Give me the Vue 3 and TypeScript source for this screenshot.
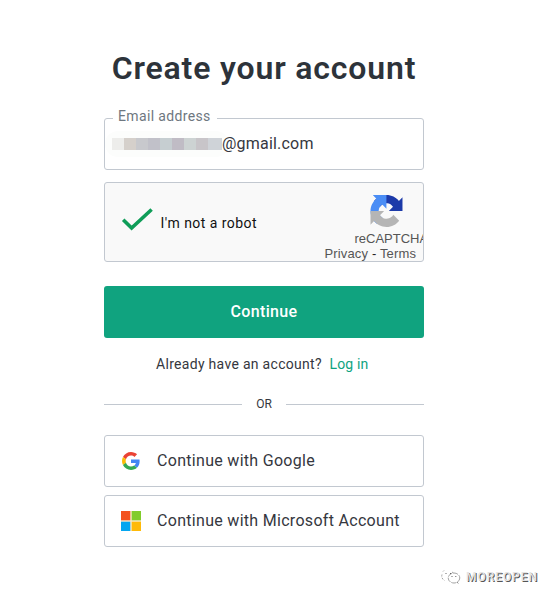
<script setup lang="ts">
const mosaic: string[] = ['#ededeb', '#d5d0cb', '#c8c9cd', '#c1c1c9', '#c6ced1', '#c0bcc5', '#cdd3d3', '#c8c5c9', '#cfd3d8']
</script>

<template>
  <div class="page">
    <main class="card">
      <h1 class="title"><span>Create your account</span></h1>

      <div class="field">
        <span class="label"><span class="label-text">Email address</span></span>
        <span class="mosaic"><i v-for="(c, i) in mosaic" :key="i" :style="{ background: c }"></i></span>
        <span class="email">@gmail.com</span>
      </div>

      <div class="captcha">
        <svg class="check" width="32" height="24" viewBox="0 0 32 24">
          <path d="M2.2 11.7 L10.6 20 L30.6 1.5" fill="none" stroke="#0f9d58" stroke-width="3.6" />
        </svg>
        <span class="robot">I'm not a robot</span>
        <div class="brand">
          <svg class="logo" width="33" height="33" viewBox="0 0 64 64">
            <path fill="#1c3aa9" d="M64 31.955l-.033-1.37V4.687l-7.16 7.16C50.948 4.674 42.033.093 32.05.093c-10.4 0-19.622 4.96-25.458 12.64l11.736 11.86a15.55 15.55 0 0 1 4.754-5.334c2.05-1.6 4.952-2.906 8.968-2.906.485 0 .86.057 1.135.163 4.976.393 9.288 3.14 11.828 7.124l-8.307 8.307L64 31.953" />
            <path fill="#4a8df5" d="M31.862.094l-1.37.033H4.594l7.16 7.16C4.58 13.147 0 22.06 0 32.046c0 10.4 4.96 19.622 12.64 25.458L24.5 45.768a15.55 15.55 0 0 1-5.334-4.754c-1.6-2.05-2.906-4.952-2.906-8.968 0-.485.057-.86.163-1.135.393-4.976 3.14-9.288 7.124-11.828l8.307 8.307L31.86.095" />
            <path fill="#b5b5b5" d="M.001 32.045l.033 1.37v25.898l7.16-7.16c5.86 7.173 14.774 11.754 24.76 11.754 10.4 0 19.622-4.96 25.458-12.64l-11.736-11.86a15.55 15.55 0 0 1-4.754 5.334c-2.05 1.6-4.952 2.906-8.968 2.906-.485 0-.86-.057-1.135-.163-4.976-.393-9.288-3.14-11.828-7.124l8.307-8.307c-10.522.04-22.4.066-27.295-.005" />
          </svg>
          <span class="name">reCAPTCHA</span>
          <span class="terms">Privacy <b>-</b> Terms</span>
        </div>
      </div>

      <button class="primary" type="button"><span>Continue</span></button>

      <p class="login"><span class="ask">Already have an account?</span><a class="link">Log in</a></p>

      <div class="divider"><span class="or">OR</span></div>

      <div class="social">
        <svg class="icon google" width="20" height="20" viewBox="0 0 48 48">
          <path fill="#ea4335" d="M24 9.5c3.54 0 6.71 1.22 9.21 3.6l6.85-6.85C35.9 2.38 30.47 0 24 0 14.62 0 6.51 5.38 2.56 13.22l7.98 6.19C12.43 13.72 17.74 9.5 24 9.5z" />
          <path fill="#4285f4" d="M46.98 24.55c0-1.57-.15-3.09-.38-4.55H24v9.02h12.94c-.58 2.96-2.26 5.48-4.78 7.18l7.73 6c4.51-4.18 7.09-10.36 7.09-17.65z" />
          <path fill="#fbbc05" d="M10.53 28.59A14.5 14.5 0 0 1 9.77 24c0-1.6.27-3.14.76-4.59l-7.98-6.19A23.9 23.9 0 0 0 0 24c0 3.88.92 7.54 2.56 10.78z" />
          <path fill="#34a853" d="M24 48c6.48 0 11.93-2.13 15.89-5.81l-7.73-6c-2.15 1.45-4.92 2.3-8.16 2.3-6.26 0-11.57-4.22-13.47-9.91l-7.98 6.19C6.51 42.62 14.62 48 24 48z" />
        </svg>
        <span class="social-text">Continue with Google</span>
      </div>
      <div class="social">
        <svg class="icon" width="20" height="20" viewBox="0 0 20 20">
          <path fill="#f9e9c8" d="M0 0h20v20H0z" />
          <path fill="#f3531f" d="M0 0h9.3v9.3H0z" />
          <path fill="#81cc2b" d="M10.7 0H20v9.3h-9.3z" />
          <path fill="#05a6f0" d="M0 10.7h9.3V20H0z" />
          <path fill="#ffba08" d="M10.7 10.7H20V20h-9.3z" />
        </svg>
        <span class="social-text">Continue with Microsoft Account</span>
      </div>
    </main>

    <footer class="watermark">
      <svg width="22" height="16" viewBox="0 0 22 16" fill="none" stroke="#999" stroke-width="0.9">
        <path d="M2 5.5C1 9 3 10.5 4.5 11.5M3 2.5l1-1M12 3l1.5 1" stroke-dasharray="2 1.3" />
        <ellipse cx="14" cy="9" rx="5.8" ry="5" stroke-dasharray="5 1" />
        <path d="M11.5 7.5h1M15.3 7.5h1M17 13.2l1.2 1.2M5.5 4.5h1M10 4.5h1" stroke="#555" />
      </svg>
      <span class="mark">MOREOPEN</span>
    </footer>
  </div>
</template>

<style>
body {
  background: #fff;
}
</style>

<style scoped>
.page {
  box-sizing: border-box;
  width: 555px;
  height: 599px;
  padding: 46px 0 0 104px;
  overflow: hidden;
  position: relative;
  font-family: Roboto, sans-serif;
  color: #353740;
  white-space: nowrap;
}
.card {
  width: 320px;
  display: flex;
  flex-direction: column;
}
.title {
  margin: 0 0 28px;
  height: 44px;
  line-height: 44px;
  font-size: 32px;
  font-weight: 600;
  color: #2d333a;
  letter-spacing: 0.83px;
  text-align: center;
}
.field,
.captcha,
.social {
  box-sizing: border-box;
  border: 1px solid #c2c8d0;
  border-radius: 3px;
}
.field {
  position: relative;
  height: 52px;
  display: flex;
  align-items: center;
  padding-left: 7px;
  font-size: 16px;
}
.label {
  position: absolute;
  left: 8px;
  top: -12px;
  width: 99px;
  height: 18px;
  line-height: 18px;
  padding-left: 5px;
  background: #fff;
  font-size: 14px;
  color: #6e7780;
  letter-spacing: 0.35px;
}
.mosaic {
  display: flex;
  width: 110px;
  height: 12px;
  box-shadow: 0 0 0 7px #fcfdfc;
  border-radius: 6px;
}
.mosaic i {
  flex: 0 0 12px;
}
.mosaic i:last-child {
  flex: 1;
}
.email {
  padding-bottom: 2px;
  letter-spacing: 0.2px;
}
.captcha {
  margin-top: 12px;
  height: 80px;
  background: #f9f9f9;
  display: flex;
  overflow: hidden;
  font-family: "Liberation Sans", sans-serif;
}
.check {
  flex: none;
  margin: 25px 0 0 16px;
}
.robot {
  flex: none;
  width: 164px;
  margin-left: 7.5px;
  line-height: 80px;
  font-family: Roboto, sans-serif;
  font-size: 14px;
  letter-spacing: 0.45px;
  color: #111;
}
.brand {
  flex: none;
  display: flex;
  flex-direction: column;
  width: 100px;
  color: #555;
  font-size: 13px;
  line-height: 15px;
}
.logo {
  margin: 12px 0 0 45px;
}
.name {
  margin: 4px 0 0 30px;
}
.terms {
  letter-spacing: 0.15px;
}
.terms b {
  font-weight: 400;
  color: #222;
}
.primary {
  margin: 24px 0 0;
  padding: 0 0 2px;
  height: 52px;
  border: 0;
  border-radius: 3px;
  background: #10a37f;
  color: #fff;
  font: 500 16px Roboto, sans-serif;
  letter-spacing: 0.35px;
}
.login {
  margin: 16px 0 0;
  height: 20px;
  line-height: 20px;
  padding-left: 52px;
  font-size: 14px;
  display: flex;
}
.ask {
  width: 173.5px;
  letter-spacing: 0.3px;
}
.link {
  color: #10a37f;
  letter-spacing: 0.15px;
}
.divider {
  margin: 20px 0 21px;
  height: 20px;
  display: flex;
  align-items: center;
  font-size: 12px;
}
.divider::before,
.divider::after {
  content: "";
  flex: 1;
  height: 1px;
  background: #c2c8d0;
}
.or {
  width: 44px;
  text-align: center;
}
.social {
  height: 52px;
  display: flex;
  align-items: center;
  padding-left: 16px;
  font-size: 16px;
  gap: 16px;
  letter-spacing: 0.3px;
}
.social-text {
  padding-bottom: 2px;
}
.social + .social {
  margin-top: 8px;
}
.google {
  padding: 1px;
  box-sizing: border-box;
}
.watermark {
  position: absolute;
  left: 440px;
  top: 568px;
  height: 18px;
  display: flex;
  align-items: center;
  gap: 4px;
  font-size: 12px;
  font-weight: 500;
  letter-spacing: 0.95px;
}
.mark {
  color: #e4e4e4;
  text-shadow: 1px 0.5px 0 #555;
}
</style>
